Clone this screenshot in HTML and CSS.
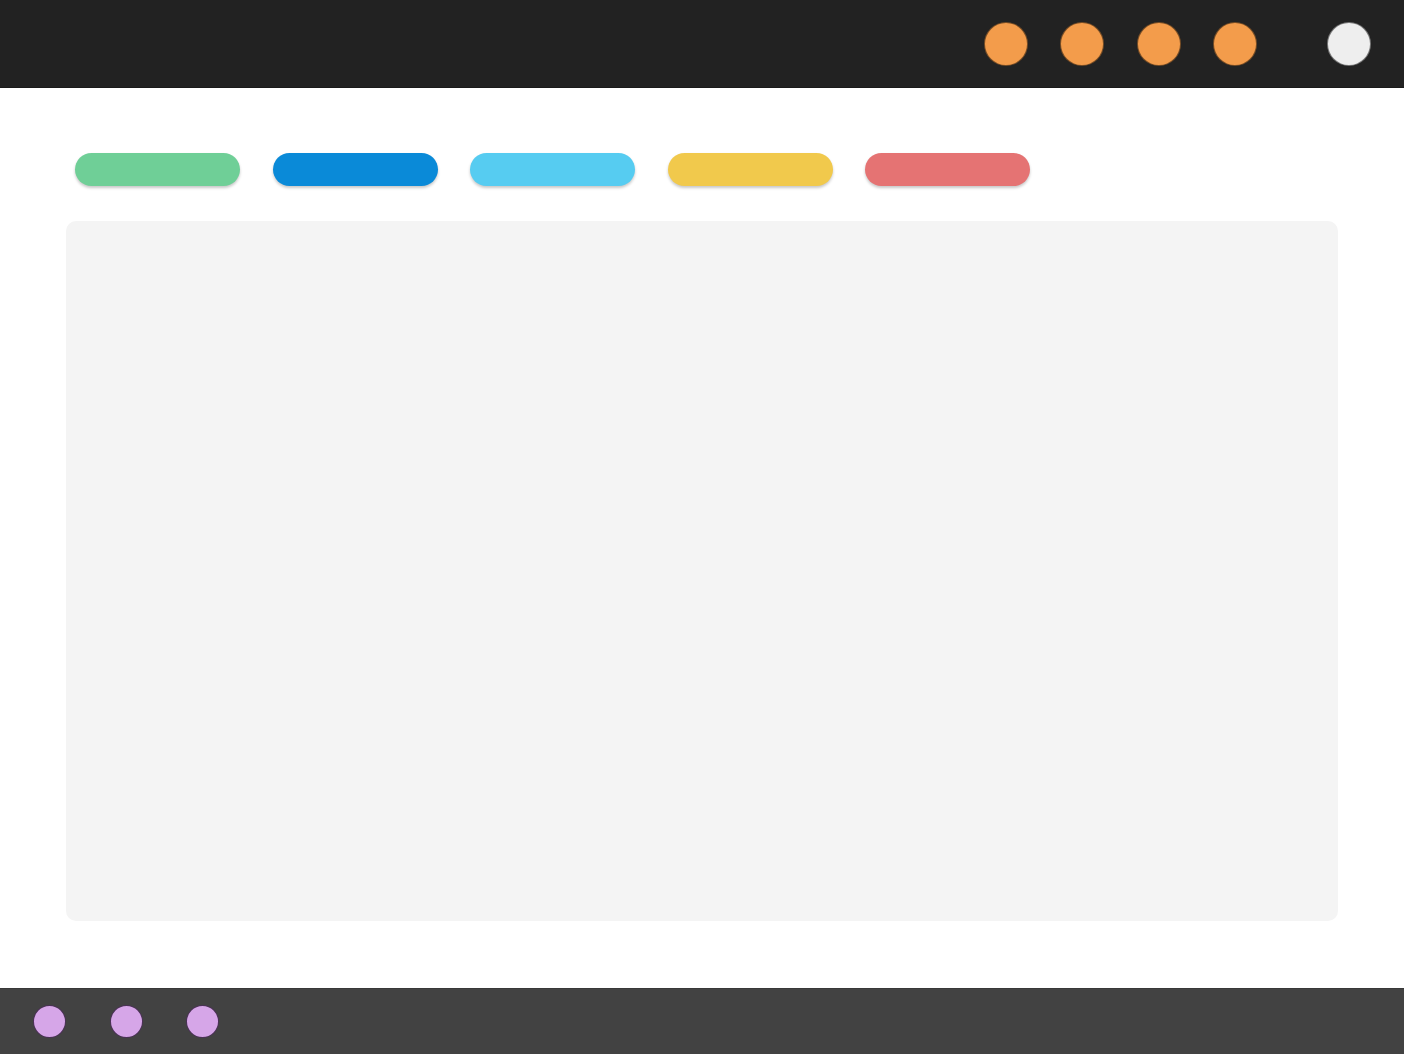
FILE: index.html
```html
<!DOCTYPE html>
<html lang="en">
<head>
<meta charset="utf-8">
<title>Layout</title>
<link rel="stylesheet" href="styles.css">
</head>
<body>
<div class="page">
  <header class="topbar">
    <div class="dots">
      <span class="dot dot-orange"></span>
      <span class="dot dot-orange"></span>
      <span class="dot dot-orange"></span>
      <span class="dot dot-orange"></span>
    </div>
    <span class="dot dot-light"></span>
  </header>
  <main class="main">
    <div class="pills">
      <span class="pill pill-green"></span>
      <span class="pill pill-blue"></span>
      <span class="pill pill-sky"></span>
      <span class="pill pill-yellow"></span>
      <span class="pill pill-red"></span>
    </div>
    <section class="panel"></section>
  </main>
  <footer class="bottombar">
    <span class="mini mini-purple"></span>
    <span class="mini mini-purple"></span>
    <span class="mini mini-purple"></span>
  </footer>
</div>
</body>
</html>
```

FILE: styles.css
```css
* { box-sizing: border-box; }
html, body { margin: 0; padding: 0; background: #ffffff; font-family: "Liberation Sans", Arial, sans-serif; }
.page {
  display: flex;
  flex-direction: column;
  height: 100vh;
  min-height: 1054px;
}
.topbar {
  height: 88px;
  flex: 0 0 88px;
  background: #222222;
  border-bottom: 1px solid #1a1a1a;
  display: flex;
  align-items: center;
  justify-content: flex-end;
  padding-right: 33px;
  gap: 70px;
}
.dots {
  display: flex;
  gap: 32.5px;
}
.dot {
  display: block;
  width: 44px;
  height: 44px;
  border-radius: 50%;
  border: 1px solid rgba(0, 0, 0, 0.5);
}
.dot-orange { background: #f39c4b; }
.dot-light { background: #eeeeee; }
.main {
  flex: 1 1 auto;
  padding: 65px 66px 0;
}
.pills {
  display: flex;
  gap: 32.5px;
  padding-left: 9px;
}
.pill {
  display: block;
  width: 165px;
  height: 33px;
  border-radius: 17px;
  box-shadow: 0 2px 3px rgba(0, 0, 0, 0.22);
}
.pill-green { background: #6fcf97; }
.pill-blue { background: #0a8ad8; }
.pill-sky { background: #56ccf1; }
.pill-yellow { background: #f1c94c; }
.pill-red { background: #e57373; }
.panel {
  margin-top: 35px;
  height: 700px;
  background: #f4f4f4;
  border-radius: 10px;
}
.bottombar {
  flex: 0 0 66px;
  height: 66px;
  background: #424242;
  border-top: 1px solid #383838;
  display: flex;
  align-items: center;
  padding-left: 33px;
  gap: 43.5px;
}
.mini {
  display: block;
  width: 33px;
  height: 33px;
  border-radius: 50%;
  border: 1px solid rgba(40, 20, 50, 0.8);
}
.mini-purple { background: #d6a6e8; }
```
